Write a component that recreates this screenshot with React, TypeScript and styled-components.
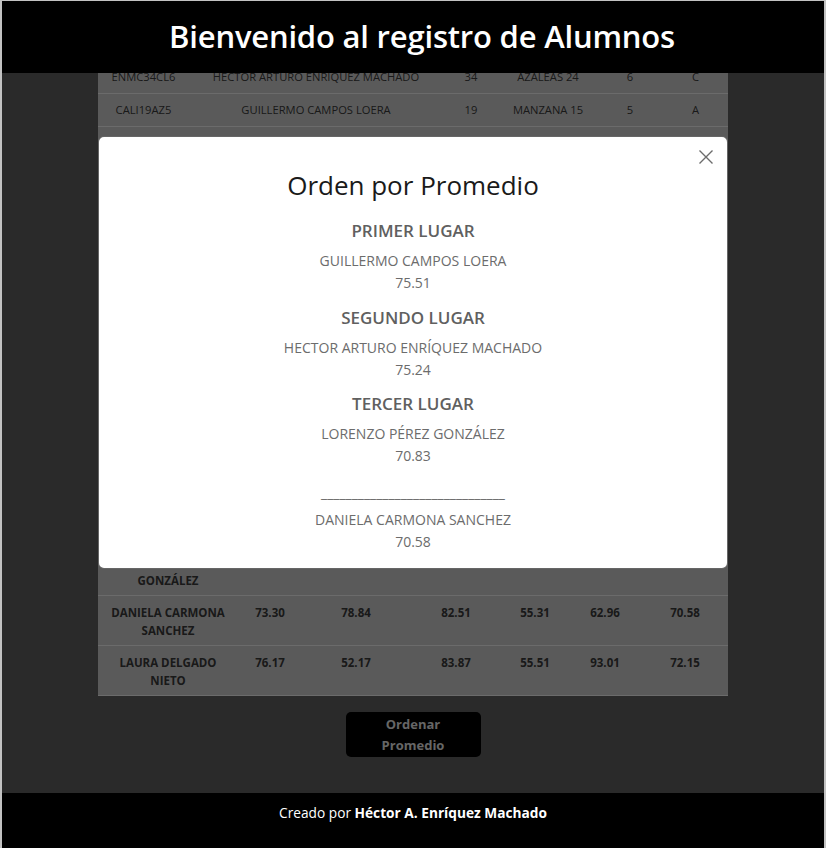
import React from "react";
import styled, { createGlobalStyle } from "styled-components";

const GlobalStyle = createGlobalStyle`
  *, *::before, *::after { box-sizing: border-box; }
  html, body { margin: 0; padding: 0; background: #c2c2c2; }
  body { font-family: "Open Sans", "Noto Sans", sans-serif; }
`;

const Frame = styled.div`
  position: relative;
  height: 100vh;
  display: flex;
  flex-direction: column;
  background: #555555;
  border-top: 1px solid #c2c2c2;
  border-left: 2px solid #c2c2c2;
  border-right: 2px solid #c2c2c2;
  overflow: hidden;
`;

const Header = styled.header`
  position: relative;
  z-index: 3;
  flex-shrink: 0;
  height: 72px;
  background: #000;
  color: #fff;
  display: flex;
  align-items: center;
  justify-content: center;
  padding-left: 18px;
`;

const Title = styled.h1`
  margin: 0;
  font-size: 31px;
  font-weight: 600;
  letter-spacing: -0.2px;
  line-height: 1.2;
`;

const Main = styled.main`
  flex: 1;
  min-height: 0;
  overflow: hidden;
  display: flex;
  flex-direction: column;
  justify-content: flex-end;
  align-items: center;
  padding-bottom: 36px;
`;

const Table = styled.table<{ $bold?: boolean }>`
  width: 630px;
  flex-shrink: 0;
  table-layout: fixed;
  border-collapse: collapse;
  background: #b5b5b5;
  color: #333;
  font-size: ${(p) => (p.$bold ? "11.5px" : "11.2px")};
  line-height: 18px;
  text-align: center;
  font-weight: ${(p) => (p.$bold ? 700 : 400)};
`;

const Col = styled.col<{ $w: number }>`
  width: ${(p) => p.$w}px;
`;

const Th = styled.th`
  padding: 7px 4px;
  font-weight: 700;
  white-space: nowrap;
  border-bottom: 1px solid #d6d6d6;
`;

const Td = styled.td<{ $tight?: boolean }>`
  padding: ${(p) => (p.$tight ? "8px 4px 5px" : "7px 4px")};
  border-bottom: 1px solid #d6d6d6;
  vertical-align: top;
`;

const SectionGap = styled.div`
  flex-shrink: 0;
  height: 187px;
`;

const SortButton = styled.button`
  flex-shrink: 0;
  margin-top: 16px;
  width: 135px;
  height: 45px;
  border: none;
  border-radius: 5px;
  background: #000;
  color: #cccccc;
  font-family: inherit;
  font-size: 13px;
  font-weight: 700;
  line-height: 21px;
  padding: 1px 18px;
`;

const Footer = styled.footer`
  position: relative;
  z-index: 3;
  flex-shrink: 0;
  height: 55px;
  background: #000;
  color: #fff;
  text-align: center;
  font-size: 13.7px;
  line-height: 20px;
  padding-top: 10px;
`;

const Backdrop = styled.div`
  position: absolute;
  inset: 0;
  z-index: 2;
  background: rgba(0, 0, 0, 0.5);
  display: flex;
  justify-content: center;
  align-items: flex-start;
  padding-top: 135px;
`;

const Modal = styled.div`
  width: 630px;
  background: #fff;
  border: 1px solid rgba(0, 0, 0, 0.6);
  border-radius: 6px;
  text-align: center;
  padding-bottom: 15px;
`;

const ModalTop = styled.div`
  display: flex;
  justify-content: flex-end;
  padding: 12px 13px 0;
`;

const CloseButton = styled.button`
  width: 16px;
  height: 16px;
  padding: 0;
  border: none;
  background: none;
  color: #6c6c6c;
  display: flex;
`;

const ModalTitle = styled.h2`
  margin: 3px 0 19px;
  font-size: 26px;
  font-weight: 500;
  line-height: 34px;
  color: #1a1a1a;
`;

const Place = styled.section`
  margin-bottom: 13.5px;
`;

const PlaceTitle = styled.h3`
  margin: 0 0 9px;
  font-size: 17px;
  font-weight: 600;
  line-height: 20px;
  color: #606060;
`;

const Line = styled.p`
  margin: 0;
  font-size: 14px;
  line-height: 22px;
  color: #6c6c6c;
`;

const Divider = styled.p`
  margin: 14.5px 0 6px;
  font-size: 14px;
  line-height: 21px;
  color: #6c6c6c;
`;

const infoCols = [91, 254, 56, 98, 66, 65];
const gradeCols = [140, 64, 108, 92, 66, 74, 86];

const students = [
  ["ENMC34CL6", "HECTOR ARTURO ENRÍQUEZ MACHADO", "34", "AZALEAS 24", "6", "C"],
  ["CALI19AZ5", "GUILLERMO CAMPOS LOERA", "19", "MANZANA 15", "5", "A"],
  ["PEGL21CS3", "LORENZO PÉREZ GONZÁLEZ", "21", "CEDROS 8", "4", "B"],
  ["CASD22TL1", "DANIELA CARMONA SANCHEZ", "22", "TULIPANES 3", "5", "B"],
  ["DENL20OR4", "LAURA DELGADO NIETO", "20", "OLIVOS 41", "3", "A"],
];

const grades = [
  ["HECTOR ARTURO ENRÍQUEZ MACHADO", "80.12", "71.45", "77.90", "68.33", "78.40", "75.24"],
  ["GUILLERMO CAMPOS LOERA", "79.85", "70.12", "81.36", "66.77", "79.45", "75.51"],
  ["LORENZO PÉREZ GONZÁLEZ", "68.40", "75.22", "71.10", "69.85", "69.58", "70.83"],
  ["DANIELA CARMONA SANCHEZ", "73.30", "78.84", "82.51", "55.31", "62.96", "70.58"],
  ["LAURA DELGADO NIETO", "76.17", "52.17", "83.87", "55.51", "93.01", "72.15"],
];

const ranking = [
  { place: "PRIMER LUGAR", name: "GUILLERMO CAMPOS LOERA", avg: "75.51" },
  { place: "SEGUNDO LUGAR", name: "HECTOR ARTURO ENRÍQUEZ MACHADO", avg: "75.24" },
  { place: "TERCER LUGAR", name: "LORENZO PÉREZ GONZÁLEZ", avg: "70.83" },
];

export default function App() {
  return (
    <>
      <GlobalStyle />
      <Frame>
        <Header>
          <Title>Bienvenido al registro de Alumnos</Title>
        </Header>
        <Main>
          <Table>
            <colgroup>
              {infoCols.map((w, i) => (
                <Col key={i} $w={w} />
              ))}
            </colgroup>
            <thead>
              <tr>
                {["Matrícula", "Nombre", "Edad", "Dirección", "Semestre", "Grupo"].map((h) => (
                  <Th key={h}>{h}</Th>
                ))}
              </tr>
            </thead>
            <tbody>
              {students.map((row) => (
                <tr key={row[0]}>
                  {row.map((c, i) => (
                    <Td key={i}>{c}</Td>
                  ))}
                </tr>
              ))}
            </tbody>
          </Table>
          <SectionGap />
          <Table $bold>
            <colgroup>
              {gradeCols.map((w, i) => (
                <Col key={i} $w={w} />
              ))}
            </colgroup>
            <thead>
              <tr>
                {["Nombre", "Español", "Matemáticas", "Historia", "Geografía", "Inglés", "Promedio"].map((h) => (
                  <Th key={h}>{h}</Th>
                ))}
              </tr>
            </thead>
            <tbody>
              {grades.map((row) => (
                <tr key={row[0]}>
                  {row.map((c, i) => (
                    <Td key={i} $tight>
                      {c}
                    </Td>
                  ))}
                </tr>
              ))}
            </tbody>
          </Table>
          <SortButton>Ordenar Promedio</SortButton>
        </Main>
        <Footer>
          Creado por <b>Héctor A. Enríquez Machado</b>
        </Footer>
        <Backdrop>
          <Modal role="dialog">
            <ModalTop>
              <CloseButton aria-label="Cerrar">
                <svg width="16" height="16" viewBox="0 0 16 16" fill="none" stroke="currentColor" strokeWidth="1.4">
                  <path d="M1.5 1.5 L14.5 14.5 M14.5 1.5 L1.5 14.5" />
                </svg>
              </CloseButton>
            </ModalTop>
            <ModalTitle>Orden por Promedio</ModalTitle>
            {ranking.map((r) => (
              <Place key={r.place}>
                <PlaceTitle>{r.place}</PlaceTitle>
                <Line>{r.name}</Line>
                <Line>{r.avg}</Line>
              </Place>
            ))}
            <Divider>______________________________</Divider>
            <Line>DANIELA CARMONA SANCHEZ</Line>
            <Line>70.58</Line>
          </Modal>
        </Backdrop>
      </Frame>
    </>
  );
}
